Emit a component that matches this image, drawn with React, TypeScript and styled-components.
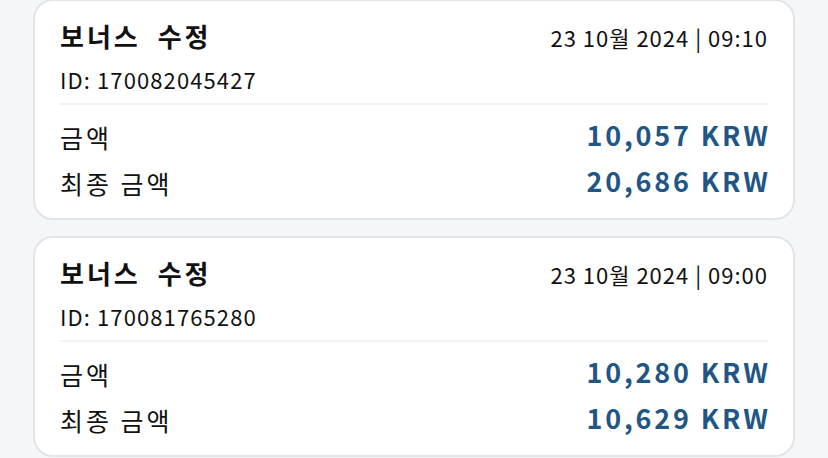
import React from 'react';
import styled, { createGlobalStyle } from 'styled-components';

interface iTransaction {
  title: string;
  date: string;
  id: string;
  amount: string;
  finalAmount: string;
}

const transactions: iTransaction[] = [
  { title: '보너스 수정', date: '23 10월 2024 | 09:10', id: '170082045427', amount: '10,057 KRW', finalAmount: '20,686 KRW' },
  { title: '보너스 수정', date: '23 10월 2024 | 09:00', id: '170081765280', amount: '10,280 KRW', finalAmount: '10,629 KRW' },
];

const GlobalStyle = createGlobalStyle`
  body {
    margin: 0;
    background: #f5f6f7;
    font-family: "Noto Sans CJK KR", "Noto Sans", sans-serif;
    color: #111;
  }
`;

const Page = styled.div`
  display: flex;
  flex-direction: column;
  gap: 16px;
  padding: 0 33px;
  margin-top: -1px;
`;

const Card = styled.div`
  background: #fff;
  border: 2px solid #e1e4e8;
  border-radius: 20px;
  padding: 18px 25px 12px;
  display: flex;
  flex-direction: column;
`;

const Head = styled.div`
  display: flex;
  justify-content: space-between;
  align-items: baseline;
`;

const Title = styled.div`
  font-size: 26px;
  font-weight: 700;
  line-height: 34px;
  letter-spacing: 3px;
  word-spacing: 8px;
`;

const DateText = styled.div`
  font-size: 22px;
  line-height: 34px;
  letter-spacing: 1px;
`;

const Id = styled.div`
  font-size: 22px;
  line-height: 32px;
  letter-spacing: 1.1px;
  margin-top: 9px;
`;

const Divider = styled.div`
  height: 2px;
  background: #f2f3f5;
  margin: 8px 0 9px;
`;

const Row = styled.div`
  display: flex;
  justify-content: space-between;
  align-items: center;
  height: 46px;
`;

const Label = styled.span`
  font-size: 25px;
  letter-spacing: 3px;
`;

const Amount = styled.span`
  font-size: 27px;
  font-weight: 700;
  letter-spacing: 2.8px;
  margin-right: -2.8px;
  margin-bottom: 6px;
  color: #1f5686;
`;

function App() {
  return (
    <>
      <GlobalStyle />
      <Page>
        {transactions.map((t, index) => (
          <Card key={index}>
            <Head>
              <Title>{t.title}</Title>
              <DateText>{t.date}</DateText>
            </Head>
            <Id>ID: {t.id}</Id>
            <Divider />
            <Row>
              <Label>금액</Label>
              <Amount>{t.amount}</Amount>
            </Row>
            <Row>
              <Label>최종 금액</Label>
              <Amount>{t.finalAmount}</Amount>
            </Row>
          </Card>
        ))}
      </Page>
    </>
  );
}

export default App;
